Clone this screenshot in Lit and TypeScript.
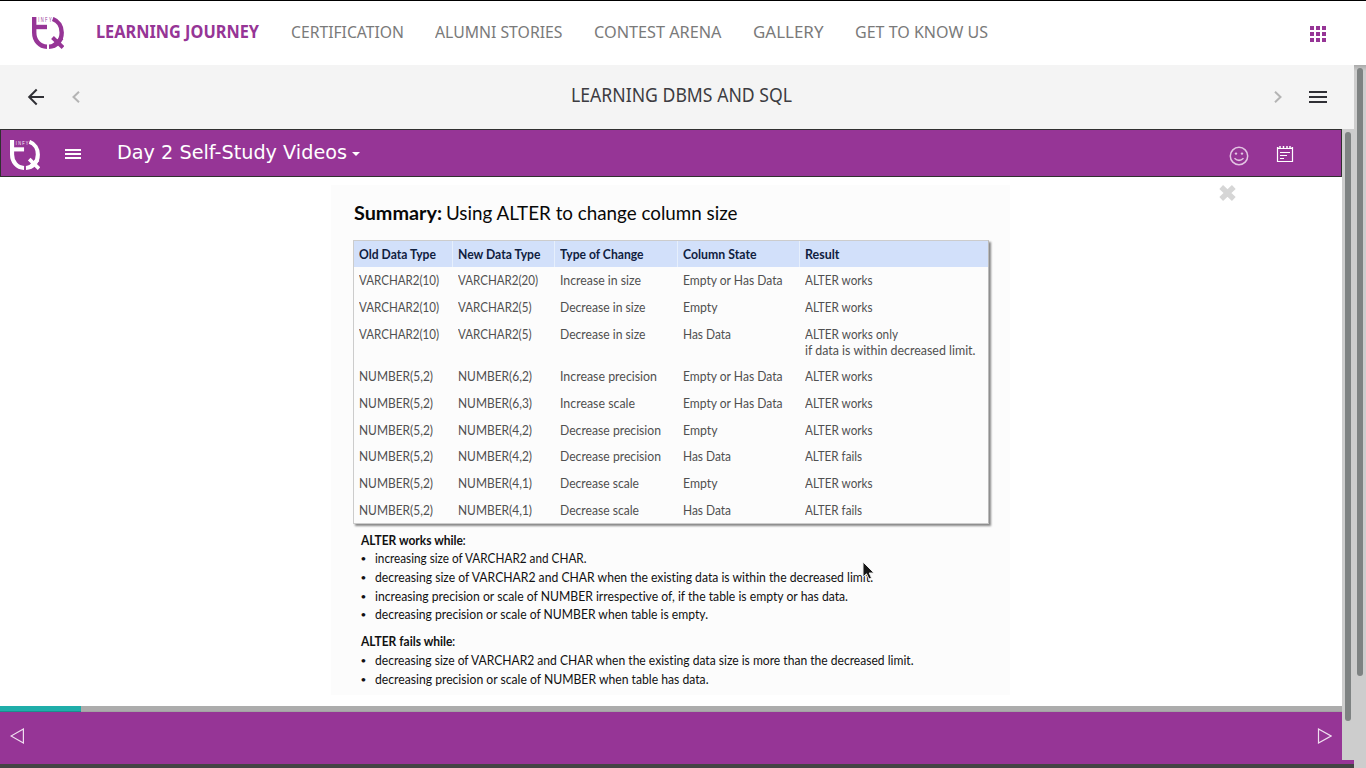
import { LitElement, html, css, svg } from "lit";
import { customElement, property } from "lit/decorators.js";

/** One line of text condensed or widened horizontally to a given width. */
@customElement("fit-text")
class FitText extends LitElement {
  @property({ type: Number }) w = 100;
  @property() text = "";
  static styles = css`
    :host { display: block; white-space: nowrap; flex: none; }
    .line { display: inline-block; transform-origin: 0 50%; vertical-align: top; }
  `;
  render() {
    return html`<span class="line">${this.text}</span>`;
  }
  updated() {
    const line = this.renderRoot.querySelector(".line") as HTMLElement;
    this.style.width = this.w + "px";
    line.style.transform = "none";
    const natural = line.getBoundingClientRect().width;
    if (natural) line.style.transform = `scaleX(${this.w / natural})`;
  }
}

const fit = (text: string, w: number, cls = "") =>
  html`<fit-text class=${cls} .text=${text} .w=${w}></fit-text>`;

@customElement("brand-logo")
class BrandLogo extends LitElement {
  static styles = css`
    :host { display: block; flex: none; }
    svg { display: block; width: 100%; height: 100%; }
    .ink { fill: none; stroke: currentColor; stroke-width: 4.4; }
    .tail { fill: none; stroke: currentColor; stroke-width: 4; }
    .name { font: 6.6px "Liberation Sans", sans-serif; fill: currentColor; letter-spacing: 2.2px; }
  `;
  render() {
    return html`<svg viewBox="0 0 32 32">
      <path class="ink" d="M2.200 0V15.500C2.200 23.500 7.500 29.600 15 29.800" />
      <path class="ink" d="M2 10H15" />
      <path class="ink" d="M20.700 2C26.500 4 29.700 9.500 29.700 15.500C29.700 23.500 24.500 29.600 17 29.800" />
      <path class="tail" d="M20.500 20.500L31 30.500M30 21L21 29" />
      <g transform="translate(6.200 5) scale(.62 1)"><text class="name">INFY</text></g>
    </svg>`;
  }
}

const NAV: [string, number][] = [
  ["CERTIFICATION", 113],
  ["ALUMNI STORIES", 127.500],
  ["CONTEST ARENA", 127.500],
  ["GALLERY", 70.500],
  ["GET TO KNOW US", 133],
];

type Cell = [string, number];
const V10: Cell = ["VARCHAR2(10)", 80];
const V20: Cell = ["VARCHAR2(20)", 80];
const V5: Cell = ["VARCHAR2(5)", 73.500];
const num = (a: string): Cell => [`NUMBER(${a})`, 74];
const EITHER: Cell = ["Empty or Has Data", 99.500];
const EMPTY: Cell = ["Empty", 34.500];
const HAS: Cell = ["Has Data", 48];
const WORKS: Cell = ["ALTER works", 67.500];
const FAILS: Cell = ["ALTER fails", 57];
const DEC_SIZE: Cell = ["Decrease in size", 85.500];
const ROWS: Cell[][] = [
  [V10, V20, ["Increase in size", 81], EITHER, WORKS],
  [V10, V5, DEC_SIZE, EMPTY, WORKS],
  [V10, V5, DEC_SIZE, HAS, ["ALTER works only", 93]],
  [num("5,2"), num("6,2"), ["Increase precision", 97], EITHER, WORKS],
  [num("5,2"), num("6,3"), ["Increase scale", 75], EITHER, WORKS],
  [num("5,2"), num("4,2"), ["Decrease precision", 101], EMPTY, WORKS],
  [num("5,2"), num("4,2"), ["Decrease precision", 101], HAS, FAILS],
  [num("5,2"), num("4,1"), ["Decrease scale", 79], EMPTY, WORKS],
  [num("5,2"), num("4,1"), ["Decrease scale", 79], HAS, FAILS],
];
const HEAD: Cell[] = [
  ["Old Data Type", 77],
  ["New Data Type", 82.500],
  ["Type of Change", 83.500],
  ["Column State", 73.500],
  ["Result", 34.500],
];
const WORKING: Cell[] = [
  ["increasing size of VARCHAR2 and CHAR.", 211.500],
  ["decreasing size of VARCHAR2 and CHAR when the existing data is within the decreased limit.", 498],
  ["increasing precision or scale of NUMBER irrespective of, if the table is empty or has data.", 473],
  ["decreasing precision or scale of NUMBER when table is empty.", 333],
];
const FAILING: Cell[] = [
  ["decreasing size of VARCHAR2 and CHAR when the existing data size is more than the decreased limit.", 538.500],
  ["decreasing precision or scale of NUMBER when table has data.", 333.500],
];

@customElement("app-root")
class AppRoot extends LitElement {
  static styles = css`
    :host {
      display: flex; flex-direction: column; position: relative;
      width: 1366px; height: 768px; overflow: hidden; background: #fff;
      box-sizing: border-box; font-family: "Noto Sans", sans-serif;
    }
    * { box-sizing: border-box; }
    svg { display: block; flex: none; }
    .nav {
      height: 65px; flex: none; border-top: 1px solid #000; display: flex;
      align-items: center; padding: 0 40px 0 32px; color: #7a7a7a;
    }
    .nav-logo { width: 32px; height: 32px; color: #963596; margin-right: 32px; }
    .items { display: flex; gap: 31.500px; flex: 1; font-size: 16.800px; line-height: 24px; padding-bottom: 2px; }
    .current { color: #963596; font-weight: 700; font-size: 17.200px; }
    .apps { margin-top: 1px; }
    .body { flex: 1; display: flex; min-height: 0; }
    .page { width: 1354px; display: flex; flex-direction: column; }
    .scroll { width: 12px; background: #cdcdcd; padding: 3px; flex: none; }
    .thumb { width: 6px; border-radius: 3px; background: #7e8282; }
    .outer { height: 608px; }
    .inner { height: 589px; }
    .shade { background: linear-gradient(#aaa, #cdcdcd 6px); }
    .course {
      height: 64px; flex: none; background: #f4f4f4; color: #3c3c41; display: flex;
      align-items: center; padding: 0 26px 0 27px;
    }
    .course-name { font-size: 19.200px; line-height: 28px; margin: 0 auto; padding: 0 0 4px; }
    .back-small { margin-left: 26px; }
    .next-small { margin-right: 26px; }
    .player { height: 631px; display: flex; flex: none; }
    .frame { width: 1342px; display: flex; flex-direction: column; }
    .bar {
      height: 48px; flex: none; background: #963596; border: 1px solid #303030; color: #fff;
      display: flex; align-items: center; padding: 0 47px 0 9px;
    }
    .bar-logo { width: 30px; height: 30px; margin: 3px 25px 0 0; }
    .lines { margin-top: 2px; }
    .video-name { font: 19px/26px "DejaVu Sans", sans-serif; margin: 0 5px 2px 35px; }
    .caret { border: 4px solid transparent; border-top-color: #fff; border-bottom: 0; margin-top: 2px; }
    .tools { margin: 2px 0 0 auto; display: flex; gap: 27px; align-items: center; }
    .smile { margin-top: 3px; }
    .stage { height: 529px; flex: none; position: relative; padding: 8px 0 0 331px; }
    .close { position: absolute; left: 1219px; top: 8px; }
    .slide {
      width: 679px; height: 510px; background: #fcfcfc; padding: 15px 0 0 22px; position: relative;
      font-family: Lato, sans-serif; font-variant-ligatures: none; color: #111;
    }
    .title { display: flex; font-size: 18.300px; line-height: 26px; height: 40px; gap: 4.500px; color: #080808; padding-left: .5px; }
    .strong { font-weight: 700; }
    .table {
      width: 636px; height: 284px; border: 1px solid #ccc; border-right-color: #bbb;
      box-shadow: 1.500px 1.500px 2px #888; background: #fcfcfc; font-size: 12.700px;
      line-height: 16px; color: #505050;
    }
    .row { display: grid; grid-template-columns: 99px 102.400px 122.600px 122.500px 1fr; height: 26.650px; }
    .tall { height: 42.700px; }
    .cell { padding: 5.400px 0 0 5px; }
    .head { height: 26px; background: #d2e0fa; color: #10203f; font-weight: 700; }
    .head .cell { padding-top: 4.600px; border-right: 1px solid #e6effc; }
    .head .cell:last-child { border: 0; }
    .notes { padding: 6.700px 0 0 7.600px; font-size: 13px; line-height: 18.650px; }
    .note-title { display: flex; }
    .note { display: flex; }
    .dot { width: 14px; font-size: 10px; }
    .gap { margin-top: 8.500px; }
    .cursor { position: absolute; left: 531px; top: 376px; }
    .progress { height: 6px; flex: none; display: flex; background: #acacac; border-bottom: 1px solid #a3a3a3; }
    .done { width: 81px; height: 6px; background: #20aeaa; border-bottom: 1px solid #198f8e; }
    .foot {
      flex: 1; background: #963596; display: flex; justify-content: space-between;
      padding: 16px 10px 0;
    }
    .tail { height: 4px; background: #963596; flex: none; }
    .base { height: 4px; background: #444; flex: none; }
  `;

  private notes(items: Cell[]) {
    return items.map(([t, w]) => html`<div class="note"><span class="dot">•</span>${fit(t, w)}</div>`);
  }

  render() {
    return html`
      <div class="nav">
        <brand-logo class="nav-logo"></brand-logo>
        <div class="items">
          ${fit("LEARNING JOURNEY", 163, "current")}
          ${NAV.map(([t, w]) => fit(t, w))}
        </div>
        <svg class="apps" width="16" height="16" fill="#963596">
          ${[0, 6, 12].map((y) => [0, 6, 12].map((x) => svg`<rect x=${x} y=${y} width="4" height="4"/>`))}
        </svg>
      </div>
      <div class="body">
        <div class="page">
          <div class="course">
            <svg width="18" height="18" fill="none" stroke="#303035" stroke-width="2"><path d="M9.700 1.500L2.200 9L9.700 16.500M2 9H17" /></svg>
            <svg class="back-small" width="10" height="12" fill="none" stroke="#b4b4b4" stroke-width="2"><path d="M8 .8L2.500 6L8 11.200" /></svg>
            <div style="width:8px"></div>
            ${fit("LEARNING DBMS AND SQL", 221, "course-name")}
            <svg class="next-small" width="10" height="12" fill="none" stroke="#b4b4b4" stroke-width="2"><path d="M2 .8L7.500 6L2 11.200" /></svg>
            <svg width="19" height="12" fill="#303035"><path d="M0 0H18V2H0ZM0 5H18V7H0ZM0 10H18V12H0Z" /></svg>
          </div>
          <div class="player">
            <div class="frame">
              <div class="bar">
                <brand-logo class="bar-logo"></brand-logo>
                <svg class="lines" width="17" height="10" fill="#fff"><path d="M0 0H16V2H0ZM0 4H16V6H0ZM0 8H16V10H0Z" /></svg>
                ${fit("Day 2 Self-Study Videos", 230, "video-name")}
                <span class="caret"></span>
                <div class="tools">
                  <svg class="smile" width="20" height="20" fill="none" stroke="#e3c5e3" stroke-width="1.500">
                    <circle cx="10" cy="10" r="8.700" /><path d="M5.500 12.300Q10 16.500 14.500 12.300" />
                    <circle cx="7" cy="7.600" r="1.200" fill="#e3c5e3" stroke="none" /><circle cx="13" cy="7.600" r="1.200" fill="#e3c5e3" stroke="none" />
                  </svg>
                  <svg width="18" height="18" fill="none" stroke="#fff">
                    <path d="M2.500 2.500H1.500V16.500H16.500V2.500H15.500" stroke-width="1.200" />
                    <path d="M2 3.500H16" /><path d="M4 1V4M7.500 1V4M11 1V4M14 1V4" stroke-width="1.500" />
                    <path d="M4 7.500H14M4 10.500H11M4 13.500H8" />
                  </svg>
                </div>
              </div>
              <div class="stage">
                <svg class="close" width="17" height="17" stroke="#d6d6d6" stroke-width="5.400"><path d="M2.200 2L14.800 14M14.800 2L2.200 14" /></svg>
                <div class="slide">
                  <div class="title">${fit("Summary:", 88, "strong")}${fit("Using ALTER to change column size", 291.500)}</div>
                  <div class="table">
                    <div class="row head">${HEAD.map(([t, w]) => html`<div class="cell">${fit(t, w)}</div>`)}</div>
                    ${ROWS.map((r, i) => html`<div class="row ${i === 2 ? "tall" : ""}">
                      ${r.map(([t, w], c) => html`<div class="cell">${fit(t, w)}${i === 2 && c === 4 ? fit("if data is within decreased limit.", 170.500) : ""}</div>`)}
                    </div>`)}
                  </div>
                  <div class="notes">
                    <div class="note-title">${fit("ALTER works while", 102, "strong")}:</div>
                    ${this.notes(WORKING)}
                    <div class="note-title gap">${fit("ALTER fails while", 91.500, "strong")}:</div>
                    ${this.notes(FAILING)}
                  </div>
                  <svg class="cursor" width="13" height="20"><path d="M1 1V16L4.500 12.800L7 18L9.500 17L7.200 12H12Z" fill="#151515" stroke="#eee" /></svg>
                </div>
              </div>
              <div class="progress"><div class="done"></div></div>
              <div class="foot">
                <svg width="14" height="16" fill="none" stroke="#f0dff0" stroke-width="1.200"><path d="M13.400 1V15L1 8Z" /></svg>
                <svg width="15" height="16" fill="none" stroke="#f0dff0" stroke-width="1.200"><path d="M1.500 1V15L14 8Z" /></svg>
              </div>
            </div>
            <div class="scroll"><div class="thumb inner"></div></div>
          </div>
          <div class="tail"></div>
          <div class="base"></div>
        </div>
        <div class="scroll shade"><div class="thumb outer"></div></div>
      </div>
    `;
  }
}
